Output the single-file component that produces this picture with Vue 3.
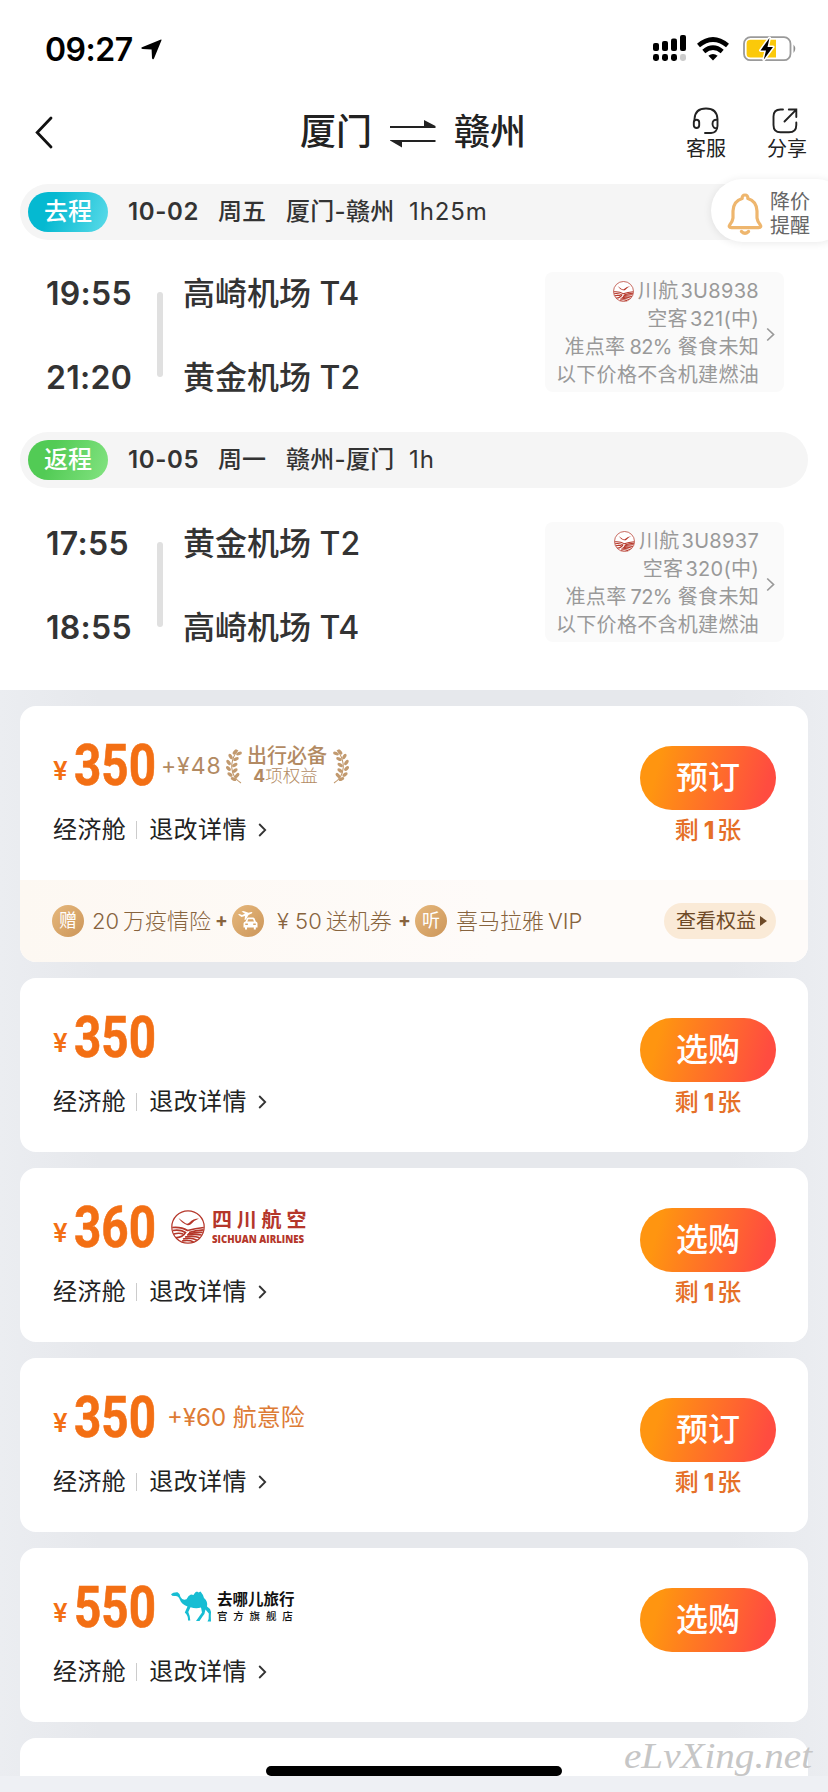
<script setup>
const flights = [
  {
    kind: 'go', tag: '去程', date: '10-02', week: '周五', route: '厦门-赣州', dur: '1h25m',
    t1: '19:55', t2: '21:20', a1: '高崎机场 T4', a2: '黄金机场 T2',
    no: '3U8938', model: '321', rate: '82%'
  },
  {
    kind: 'back', tag: '返程', date: '10-05', week: '周一', route: '赣州-厦门', dur: '1h',
    t1: '17:55', t2: '18:55', a1: '黄金机场 T2', a2: '高崎机场 T4',
    no: '3U8937', model: '320', rate: '72%'
  }
]
const fares = [
  { price: '350', extra: 'gift', btn: '预订', left: true },
  { price: '350', extra: '', btn: '选购', left: true },
  { price: '360', extra: 'sichuan', btn: '选购', left: true },
  { price: '350', extra: 'insure', btn: '预订', left: true },
  { price: '550', extra: 'qunar', btn: '选购', left: false }
]
const leaves = [
  [9, 4, -50], [13, 5.5, -20], [4.6, 8.5, 60], [10, 11, -25], [2.6, 14.5, 55], [8.8, 17, -30],
  [2.4, 20.5, 45], [9, 22.5, -35], [4, 26.5, 35], [11, 27.5, -50], [7.5, 31, 25]
]
</script>

<template>
  <div class="page">
    <svg class="defs" width="0" height="0" aria-hidden="true">
      <symbol id="scal" viewBox="0 0 34 34">
        <circle cx="17" cy="17" r="16.2" fill="#fff" stroke="#b5372a" stroke-width="1.2" />
        <path d="M7.500 8 L13.500 12.400 Q16.500 14.800 18.500 12.600 Q22 8.800 28 8.600 Q23.500 10.500 21 13.200 Q18.500 15.800 16 14.900 Q10.500 13 7.500 8Z" fill="#b5372a" />
        <g fill="none" stroke="#b5372a" stroke-width="1.7">
          <path d="M1.200 17.500 Q10 16.500 16.500 20.500 Q24 18.500 32.800 17.500" />
          <path d="M1.800 20.500 Q9 19.200 14.500 22.500 Q11 28 5 27.500" />
          <path d="M2.800 24 Q8 22.500 12 24" />
          <path d="M32.600 19.800 Q24 20.300 18 22.500" />
          <path d="M31.800 22.400 Q24 22 17 24" />
          <path d="M30.600 25 Q24 23.800 16 25" />
          <path d="M28.600 27.800 Q23 25.400 14 27" />
          <path d="M26 30.200 Q20 27 12 29" />
          <path d="M22.600 32 Q18 29.500 11 31" />
        </g>
      </symbol>
      <symbol id="laurel" viewBox="0 0 16 36">
        <path d="M15 35 C3.500 28 3 13 12 2" fill="none" stroke="#c29a6f" stroke-width="1.1" />
        <ellipse v-for="(l, i) in leaves" :key="i" :cx="l[0]" :cy="l[1]" rx="3" ry="1.7" fill="#c29a6f" :transform="`rotate(${l[2]} ${l[0]} ${l[1]})`" />
      </symbol>
    </svg>

    <header class="status">
      <span class="clock">09:27</span>
      <svg class="loc" width="21" height="21" viewBox="0 0 21 21"><path d="M20 .6 Q20.800 .4 20.400 1.400 L13 19.500 Q11.600 21.400 11 19 L10.600 10.400 L1.600 10 Q-.8 9.400 1 8.200 Z" /></svg>
      <svg class="cell" width="34" height="27" viewBox="0 0 34 27">
        <rect x="0" y="8" width="6" height="8" rx="2" /><rect x="9" y="6" width="6" height="10" rx="2" /><rect x="18" y="3.500" width="6" height="12.500" rx="2" /><rect x="27" y="0" width="6" height="16" rx="2" />
        <rect x="0" y="19" width="6" height="7" rx="2.400" /><rect x="9" y="19" width="6" height="7" rx="2.400" /><rect x="18" y="19" width="6" height="7" rx="2.400" /><rect x="27" y="19" width="6" height="7" rx="2.400" fill="#ccc" />
      </svg>
      <svg class="wifi" width="32" height="24" viewBox="0 0 32 24">
        <g fill="none" stroke="#000" stroke-width="4.600"><path d="M1.500 8.600 Q16 -3.600 30.500 8.600" /><path d="M6.800 14.400 Q16 6.700 25.200 14.400" /></g>
        <path d="M11.400 18.800 Q16 15.200 20.600 18.800 L16 23.600Z" />
      </svg>
      <svg class="batt" width="54" height="28" viewBox="0 0 54 28">
        <rect x="1" y="2.200" width="46.500" height="23" rx="6.500" fill="#fff" stroke="#9a9a9a" stroke-width="1.800" />
        <path d="M50.500 9.500 Q54 13.700 50.500 18Z" fill="#8d8d8d" />
        <path d="M7.500 4.800 H33 V22.600 H7.500 Q3.600 22.600 3.600 19 V8.400 Q3.600 4.800 7.500 4.800Z" fill="#fbc90a" />
        <path d="M26.500 3 L17.500 15.400 H23 L20.800 24.500 L30 12 H24.500 Z" stroke="#fff" stroke-width="3" paint-order="stroke" stroke-linejoin="round" />
      </svg>
    </header>

    <nav class="nav">
      <svg class="back" width="18" height="34" viewBox="0 0 18 34"><path d="M16 2 L2.200 16.500 L16 31" fill="none" stroke="#111" stroke-width="2.800" stroke-linecap="round" /></svg>
      <h1 class="title">
        <span>厦门</span>
        <svg width="46" height="28" viewBox="0 0 46 28"><path d="M0 6 H34 V0 L45.500 6 V8 H0Z M0 20 H45.500 V22 H12 V27.500 L0 20.500Z" fill="#222" /></svg>
        <span>赣州</span>
      </h1>
      <div class="act service">
        <svg width="28" height="28" viewBox="0 0 28 28" fill="none" stroke="#222" stroke-width="1.900"><path d="M2.500 13 V12 Q3 1.500 14 1.500 Q25 1.500 25.500 12 V19 Q25 25.800 19 26 H13" stroke-linecap="round" /><rect x="1.800" y="12.800" width="5.400" height="8.200" rx="2.700" /><path d="M25.500 12.800 Q20.500 12 20.500 17 Q20.800 21.800 25.500 21" /></svg>
        <span>客服</span>
      </div>
      <div class="act share">
        <svg width="28" height="28" viewBox="0 0 28 28" fill="none" stroke="#222" stroke-width="1.900" stroke-linecap="round"><path d="M12 2.500 H9.500 Q2.500 2.500 2.500 9.500 V18 Q2.500 25.300 9.500 25.300 H18 Q25.300 25.300 25.300 18 V15.500" /><path d="M13.500 14.500 L25 2.800 M17.800 2.500 H25.300 V10" /></svg>
        <span>分享</span>
      </div>
    </nav>

    <section v-for="f in flights" :key="f.kind" class="leg" :class="f.kind">
      <div class="bar">
        <span class="tag">{{ f.tag }}</span>
        <span class="date">{{ f.date }}</span>
        <span class="week">{{ f.week }}</span>
        <span class="route">{{ f.route }}</span>
        <span class="dur">{{ f.dur }}</span>
      </div>
      <div class="detail">
        <div class="times"><span>{{ f.t1 }}</span><span>{{ f.t2 }}</span></div>
        <i class="stick"></i>
        <div class="ports"><span>{{ f.a1 }}</span><span>{{ f.a2 }}</span></div>
        <div class="info">
          <div class="lines">
            <p><svg width="21" height="21"><use href="#scal" /></svg>川航<b>{{ f.no }}</b></p>
            <p>空客<b>{{ f.model }}</b>(中)</p>
            <p>准点率<b class="rate">{{ f.rate }}</b>餐食未知</p>
            <p>以下价格不含机建燃油</p>
          </div>
          <svg class="chev" width="9" height="15" viewBox="0 0 9 15"><path d="M1.200 1.500 L7.500 7.500 L1.200 13.500" fill="none" stroke="#999" stroke-width="1.700" /></svg>
        </div>
      </div>
    </section>

    <div class="alert">
      <svg width="36" height="42" viewBox="0 0 36 42" fill="none" stroke="#eeb66e" stroke-width="3.200" stroke-linejoin="round" stroke-linecap="round">
        <path d="M15.200 5.500 Q15 2 18 2 Q21 2 20.800 5.500 Q29.500 8 30 18 V25 Q30.500 28.500 33 31.500 Q35 34.500 31.500 34.700 H4.500 Q1 34.500 3 31.500 Q5.500 28.500 6 25 V18 Q6.500 8 15.200 5.500Z" />
        <path d="M14.500 38.500 Q18 42 21.500 38.500" />
      </svg>
      <span>降价<br />提醒</span>
    </div>

    <main class="fares">
      <article v-for="(c, i) in fares" :key="i" class="card">
        <div class="body">
          <div class="desc">
            <div class="priceRow">
              <span class="yen">¥</span>
              <svg class="price" width="84" height="52" viewBox="0 0 84 52"><text x="1" y="45" textLength="82" lengthAdjust="spacingAndGlyphs">{{ c.price }}</text></svg>
              <template v-if="c.extra === 'gift'">
                <span class="plus">+¥48</span>
                <svg class="lau" width="16" height="36"><use href="#laurel" /></svg>
                <span class="perk"><strong>出行必备</strong><small><b>4</b>项权益</small></span>
                <svg class="lau flip" width="16" height="36"><use href="#laurel" /></svg>
              </template>
              <span v-else-if="c.extra === 'insure'" class="insure">+¥60 航意险</span>
              <div v-else-if="c.extra === 'sichuan'" class="sc">
                <svg width="34" height="34"><use href="#scal" /></svg>
                <span class="scName"><em>四川航空</em><svg width="94" height="14" viewBox="0 0 94 14"><text x="0" y="10.500" textLength="92" lengthAdjust="spacingAndGlyphs">SICHUAN AIRLINES</text></svg></span>
              </div>
              <div v-else-if="c.extra === 'qunar'" class="qn">
                <svg width="41" height="32" viewBox="0 0 41 32"><path d="M0 3.200 Q2 1 6.500 1.200 Q9 2.500 9.500 6 Q11.500 9.800 15.500 8.200 Q17.500 4.500 20 3.600 L22.500 4 Q24 .8 26 .5 L27.500 1.500 L29.500 .6 Q32 3.500 33 7 Q37 10 36 15.500 L39 18 Q40.800 21 39.800 25 L40 30.500 H36.500 L37.600 28 L37.800 22.500 L34.500 18.500 Q34 23 31.500 25.500 L28.500 30 H25 L31 21.500 L30 16.500 Q25 18 19.500 16.200 L17.300 21 Q18.800 24 19.300 29.500 H17 Q17.500 25 13.800 21.500 L16.500 15.500 Q10.500 13 9 9 Q7.500 4.500 4 5 Q1 5.400 0 3.200Z" fill="#17bdd3" /></svg>
                <span><strong>去哪儿旅行</strong><small>官方旗舰店</small></span>
              </div>
            </div>
            <div class="cabin">
              <span>经济舱</span><i></i><span>退改详情</span>
              <svg width="9" height="14" viewBox="0 0 9 14"><path d="M1.200 1 L7.200 7 L1.200 13" fill="none" stroke="#333" stroke-width="1.800" /></svg>
            </div>
          </div>
          <div class="buy">
            <button>{{ c.btn }}</button>
            <span v-if="c.left">剩<b>1</b>张</span>
          </div>
        </div>
        <div v-if="c.extra === 'gift'" class="band">
          <span class="dot">赠</span><span class="t1">20<u></u>万疫情险</span><b class="add">+</b>
          <span class="dot">
            <svg width="20" height="20" viewBox="0 0 20 20" fill="#fff"><path d="M0 3.500 L1.500 3 L4 4 L7 2.700 L3.500 .5 L5.500 0 L10.500 1.800 L13.500 1 Q15 1 14 2.200 L10.500 4 L8 8.500 L6.500 9 L7 5 L3.500 6Z" /><path d="M7.500 10.500 L9 7.200 Q9.300 6.500 10 6.500 H15 Q16 6.500 16.500 7.300 L17.800 10.500 Q19.500 11 19.500 12.500 V16.500 H17.800 V18.500 H15.800 V16.500 H9 V18.500 H7 V16.500 H5.500 V12.500 Q5.500 11 7.500 10.500Z" /><path d="M10.300 8.300 H15 L16 10.500 H9.300Z M7.300 12.600 h2.600 v1.500 h-2.600Z M15.200 12.600 h2.600 v1.500 h-2.600Z" fill="#d9a566" /></svg>
          </span><span class="t2">¥ 50<u></u>送机券</span><b class="add">+</b>
          <span class="dot">听</span><span class="t3">喜马拉雅<u></u>VIP</span>
          <span class="more">查看权益<i></i></span>
        </div>
      </article>
      <article class="card stub"></article>
    </main>

    <div class="home"></div>
    <svg class="mark" width="204" height="50" viewBox="0 0 204 50"><text x="4" y="34" textLength="188" lengthAdjust="spacingAndGlyphs">eLvXing.net</text></svg>
  </div>
</template>

<style>
body { margin: 0; background: #eef0f4; }
</style>

<style scoped>
.page { position: relative; width: 828px; height: 1792px; overflow: hidden; background: #fff; color: #333; font-family: Inter, "Noto Sans CJK SC", sans-serif; }
.defs { position: absolute; }
svg { display: block; flex: none; }
p, h1 { margin: 0; }
.status { display: flex; height: 100px; box-sizing: border-box; padding-left: 45px; align-items: flex-start; color: #000; }
.clock { width: 96px; margin-top: 30px; font-size: 32px; line-height: 40px; font-weight: 600; letter-spacing: -.5px; white-space: nowrap; }
.loc { margin-top: 39px; }
.cell { margin: 35px 0 0 491px; }
.wifi { margin: 37px 0 0 10px; }
.batt { margin: 35px 0 0 14px; }
.nav { display: flex; height: 84px; align-items: flex-start; }
.back { margin: 16px 0 0 35px; }
.title { display: flex; width: 226px; margin-left: 247px; font-size: 36px; line-height: 64px; font-weight: 500; color: #222; justify-content: space-between; }
.title svg { margin-top: 20px; }
.act { display: flex; width: 44px; flex-direction: column; align-items: center; font-size: 20px; line-height: 24px; color: #222; padding-top: 7px; }
.act span { margin-top: 2px; white-space: nowrap; }
.service { margin-left: 158px; }
.share { margin-left: 37px; }
.share svg { margin-right: 4px; }
.bar { display: flex; height: 56px; margin: 0 20px; border-radius: 28px; background: #f5f5f5; align-items: center; font-size: 24px; line-height: 56px; font-weight: 500; white-space: nowrap; }
.tag { width: 80px; height: 40px; margin-left: 8px; border-radius: 20px; color: #fff; line-height: 40px; text-align: center; background: linear-gradient(110deg, #05b9d1 30%, #5bdbe9); }
.back .tag { background: linear-gradient(110deg, #52cb55 30%, #83e381); }
.date { width: 90px; margin-left: 20px; letter-spacing: .6px; font-weight: 600; }
.week { width: 68px; }
.route { width: 123px; letter-spacing: .3px; }
.dur { font-weight: 400; letter-spacing: .9px; }
.detail { display: flex; height: 192px; box-sizing: border-box; padding: 32px 44px 0 46px; align-items: flex-start; }
.leg.back { margin: 0; }
.leg.back .detail { height: 202px; padding-top: 34px; }
.times, .ports { display: flex; height: 124px; margin-top: 2px; flex-direction: column; justify-content: space-between; font-size: 32px; line-height: 40px; white-space: nowrap; }
.times { width: 111px; font-weight: 600; letter-spacing: .3px; }
.ports { margin-left: 20px; font-weight: 500; }
.stick { width: 6px; height: 85px; margin-top: 20px; border-radius: 3px; background: #e0e0e0; }
.info { display: flex; width: 239px; height: 120px; box-sizing: border-box; margin-left: auto; padding: 5px 9px 0 0; border-radius: 8px; background: #fafafa; justify-content: flex-end; color: #999; }
.lines { font-size: 20px; line-height: 28px; letter-spacing: .3px; white-space: nowrap; }
.lines p { display: flex; justify-content: flex-end; align-items: center; }
.lines p svg { margin-right: 4px; }
.lines b { font-weight: 400; margin-left: 2px; }
.lines .rate { margin: 0 6px 0 4px; letter-spacing: -.6px; }
.chev { margin: 50px 0 0 7px; }
.alert { position: absolute; left: 711px; top: 179px; display: flex; width: 137px; height: 63px; box-sizing: border-box; padding: 14px 0 0 16px; border-radius: 32px; background: #fff; box-shadow: 0 1px 8px rgba(0, 0, 0, .09); font-size: 20px; line-height: 24px; color: #666; }
.alert span { margin: -3px 0 0 7px; }
.fares { height: 1086px; box-sizing: border-box; padding: 16px 20px 0; overflow: hidden; background: linear-gradient(90deg, #ebedf1, #e6e8ec 12%, #e6e8ec 88%, #ebedf1); }
.card { margin-bottom: 16px; border-radius: 16px; background: #fff; overflow: hidden; }
.stub { height: 60px; }
.body { display: flex; height: 174px; justify-content: space-between; }
.desc { padding-left: 33px; }
.priceRow { display: flex; height: 52px; margin-top: 34px; align-items: flex-start; white-space: nowrap; }
.yen { width: 20px; margin-top: 16px; font-size: 26px; line-height: 30px; font-weight: 600; color: #f36f14; }
.price { overflow: visible; }
.price text { font: 700 57px Roboto, sans-serif; fill: #f36f14; stroke: #f36f14; stroke-width: .6px; }
.plus { width: 67px; margin: 13px 0 0 4px; font-size: 23px; line-height: 26px; color: #b28a62; letter-spacing: .9px; }
.lau { margin-top: 8px; margin-left: -2px; }
.flip { transform: scaleX(-1); margin-left: 6px; }
.perk { display: flex; width: 80px; margin: 5px 0 0 5px; flex-direction: column; align-items: center; color: #b28a62; }
.perk strong { font-size: 20px; line-height: 22px; font-weight: 500; }
.perk small { font-size: 17.500px; line-height: 18px; font-weight: 300; margin-right: 3px; }
.perk b { font-weight: 700; }
.insure { margin: 13px 0 0 10px; font-size: 24px; line-height: 26px; color: #dd7b35; }
.sc { display: flex; margin: 8px 0 0 14px; }
.scName { margin: -2px 0 0 7px; color: #b5372a; }
.scName em { display: block; font-size: 20px; line-height: 24px; letter-spacing: 4.800px; font-weight: 700; font-style: normal; }
.scName text { font: 800 11px "Open Sans", sans-serif; fill: #b5372a; }
.qn { display: flex; margin: 9px 0 0 14px; color: #111; }
.qn span { margin: 0 0 0 5px; }
.qn strong { display: block; font-size: 15.500px; line-height: 18px; font-weight: 700; }
.qn small { display: block; margin-top: 1px; font-size: 10.500px; line-height: 14px; letter-spacing: 5.800px; font-weight: 500; }
.cabin { display: flex; margin-top: 17px; font-size: 24px; line-height: 42px; letter-spacing: .4px; color: #222; align-items: center; }
.cabin i { width: 1px; height: 18px; margin: 0 12px 0 10px; background: #ccc; }
.cabin svg { margin-left: 11px; }
.buy { display: flex; width: 136px; margin: 40px 32px 0 0; flex-direction: column; align-items: center; color: #e57028; font-size: 24px; font-weight: 500; line-height: 42px; }
button { width: 136px; height: 64px; border: 0; border-radius: 32px; padding: 0; background: linear-gradient(105deg, #ff9510 15%, #ff4c40 90%); color: #fff; font: 500 32px/64px Inter, "Noto Sans CJK SC", sans-serif; }
.buy b { font-weight: 800; margin: 0 3px 0 5px; }
.band { display: flex; height: 82px; box-sizing: border-box; padding: 0 32px; align-items: center; background: linear-gradient(90deg, #fdf8f2, #fefbf9 60%); color: #87633d; font-size: 22px; font-weight: 300; line-height: 32px; white-space: nowrap; }
.dot { display: flex; width: 32px; height: 32px; border-radius: 50%; align-items: center; justify-content: center; color: #fff; font-size: 18px; font-weight: 400; background: linear-gradient(135deg, #e6b87c, #cc965a); }
.t1 { width: 123px; margin-left: 8px; }
.t2 { width: 121px; margin-left: 13px; }
.t3 { margin-left: 9px; }
.band u { display: inline-block; width: 4px; }
.add { width: 17px; font-size: 19px; font-weight: 700; }
.more { display: flex; width: 112px; height: 36px; box-sizing: border-box; margin-left: auto; padding-left: 12px; border-radius: 18px; background: #faead7; align-items: center; font-size: 20px; font-weight: 400; color: #6e4a28; }
.more i { margin-left: 4px; border: 5px solid transparent; border-left: 7px solid #6e4a28; border-right: 0; }
.home { position: absolute; left: 266px; top: 1766px; width: 296px; height: 10px; border-radius: 5px; background: #000; }
.page::after { content: ""; display: block; height: 16px; background: #eef0f4; }
.mark { position: absolute; left: 620px; top: 1734px; }
.mark text { font: italic 500 36px "Liberation Serif", serif; fill: #c6c6c6; }
</style>
